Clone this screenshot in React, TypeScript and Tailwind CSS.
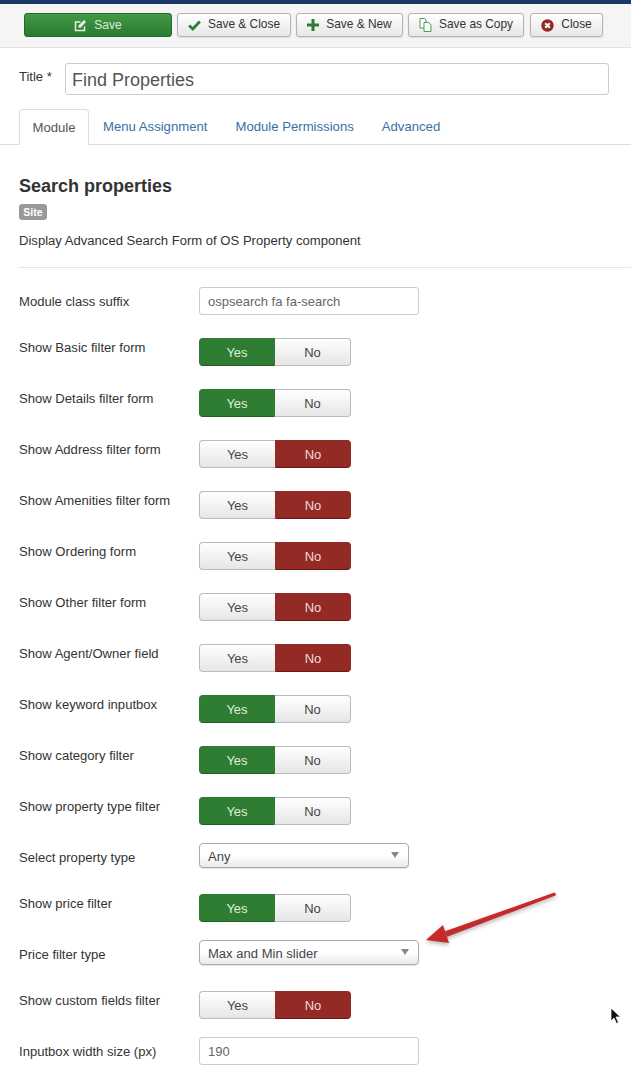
import type { ReactNode } from "react";

function ToolbarButton({ width, icon, label }: { width: string; icon: ReactNode; label: string }) {
  return (
    <button className={`${width} h-[24px] flex items-center justify-center gap-[7px] rounded-[3px] border border-[#b3b3b3] bg-gradient-to-b from-[#ffffff] to-[#e6e6e6] text-[11.9px] text-[#333] shadow-[0_1px_2px_rgba(0,0,0,0.1)]`}>
      {icon}
      <span>{label}</span>
    </button>
  );
}

function Toggle({ on }: { on: boolean }) {
  return (
    <div className="flex w-[152px] h-[28px] text-[13px] leading-[28px] text-center">
      <div className={on
        ? "w-[76px] rounded-l-[4px] border border-[#2f7d32] border-b-[#1f5e23] bg-[#2f7d32] text-[#dfeedf]"
        : "w-[76px] rounded-l-[4px] border border-[#bbb] border-r-0 bg-gradient-to-b from-[#ffffff] to-[#e6e6e6] text-[#444]"}>
        Yes
      </div>
      <div className={on
        ? "w-[76px] rounded-r-[4px] border border-[#bbb] border-l-0 bg-gradient-to-b from-[#ffffff] to-[#e6e6e6] text-[#444]"
        : "w-[76px] rounded-r-[4px] border border-[#942a25] border-b-[#6e1512] bg-[#942a25] text-[#f0d8d8]"}>
        No
      </div>
    </div>
  );
}

function Select({ width, value }: { width: string; value: string }) {
  return (
    <div className={`${width} h-[25px] flex items-center justify-between pl-[8px] pr-[9px] rounded-[4px] border border-[#aaa] bg-gradient-to-b from-[#ffffff] from-50% to-[#e9e9e9] text-[13.05px] text-[#444] shadow-[0_1px_1px_rgba(0,0,0,0.12)]`}>
      <span className="pt-[2px]">{value}</span>
      <svg width="8" height="6" viewBox="0 0 8 6" className="mb-[2px]"><path d="M0 0h8L4 6z" fill="#888" /></svg>
    </div>
  );
}

function TextInput({ value }: { value: string }) {
  return (
    <div className="w-[220px] h-[28px] flex items-center px-[8px] pt-[1px] rounded-[3px] border border-[#ccc] bg-white text-[13px] text-[#666]">
      {value}
    </div>
  );
}

function Row({ label, top, labelPt, children }: { label: string; top: string; labelPt: string; children: ReactNode }) {
  return (
    <div className={`flex ${top}`}>
      <div className={`w-[180px] text-[13.08px] leading-[18px] text-[#333] ${labelPt}`}>{label}</div>
      {children}
    </div>
  );
}

function ToggleRow({ label, on, top = "mt-[23px]" }: { label: string; on: boolean; top?: string }) {
  return (
    <Row label={label} top={top} labelPt="pt-[1px]">
      <Toggle on={on} />
    </Row>
  );
}

export default function App() {
  return (
    <div className="relative w-[631px] h-[1070px] overflow-hidden bg-white" style={{ fontFamily: '"Liberation Sans", Arial, sans-serif' }}>
      <div className="h-[4px] bg-[#1a3867]" />

      {/* Toolbar */}
      <div className="h-[44px] pt-[9px] pl-[24px] flex gap-[5px] bg-[#f5f5f5] border-b border-[#e3e3e3]">
        <button className="w-[148px] h-[24px] flex items-center justify-center gap-[7px] rounded-[3px] border border-[#1f6a25] bg-gradient-to-b from-[#419a45] to-[#2b7a30] text-[12px] text-[#d8ead8]">
          <svg width="13" height="13" viewBox="0 0 13 13" fill="none" stroke="#e4f0e4" strokeWidth="1.5">
            <path d="M10.5 7.5V11.5H1.5V3h5" />
            <path d="M4.5 8.8V6.4L10 1l2 2-5.4 5.8z" fill="#e4f0e4" stroke="none" />
          </svg>
          <span>Save</span>
        </button>
        <ToolbarButton width="w-[114px]" label="Save & Close" icon={
          <svg width="13" height="11" viewBox="0 0 13 11" fill="none" stroke="#2f7d32" strokeWidth="2.8">
            <path d="M1.2 5.5l3.6 3.4L11.8 1.5" />
          </svg>
        } />
        <ToolbarButton width="w-[107px]" label="Save & New" icon={
          <svg width="12" height="12" viewBox="0 0 12 12"><path d="M4.5 0h3v4.5H12v3H7.5V12h-3V7.500H0v-3h4.500z" fill="#2f7d32" /></svg>
        } />
        <ToolbarButton width="w-[116px]" label="Save as Copy" icon={
          <svg width="13" height="14" viewBox="0 0 13 14" fill="none" stroke="#4d9a52" strokeWidth="1">
            <path d="M1 .5h4.5L7 2v8H1z" fill="#fff" />
            <path d="M5 4.5h4.5L12 7v6.5H5z" fill="#fff" />
          </svg>
        } />
        <div className="ml-[1px]">
          <ToolbarButton width="w-[73px]" label="Close" icon={
            <svg width="13" height="13" viewBox="0 0 13 13">
              <circle cx="6.5" cy="6.5" r="6.2" fill="#942a25" />
              <path d="M4.2 4.2l4.6 4.6M8.8 4.2l-4.6 4.6" stroke="#fff" strokeWidth="2" />
            </svg>
          } />
        </div>
      </div>

      {/* Title */}
      <div className="flex mt-[15px] pl-[19px]">
        <div className="w-[46px] pt-[5px] text-[13px] leading-[18px] text-[#333]">Title *</div>
        <div className="w-[544px] h-[32px] flex items-center px-[6px] pt-[2px] rounded-[3px] border border-[#ccc] text-[18px] text-[#555]">Find Properties</div>
      </div>

      {/* Tabs */}
      <div className="flex mt-[14px] pl-[19px] h-[36px] border-b border-[#ddd] text-[13.15px]">
        <div className="w-[70px] h-[36px] leading-[36px] text-center rounded-t-[4px] border border-[#ddd] border-b-white bg-white text-[#555]">Module</div>
        <div className="ml-[14px] leading-[36px] text-[#3a70a8]">Menu Assignment</div>
        <div className="ml-[28px] leading-[36px] text-[#3a70a8]">Module Permissions</div>
        <div className="ml-[28px] leading-[36px] text-[#3a70a8]">Advanced</div>
      </div>

      {/* Module description */}
      <div className="pl-[19px]">
        <h2 className="mt-[30px] text-[18px] leading-[22px] font-bold text-[#333]">Search properties</h2>
        <span className="block mt-[7px] w-[28px] h-[16px] rounded-[3px] bg-[#999] text-center text-[10.5px] leading-[16px] font-bold text-white">Site</span>
        <p className="mt-[12px] text-[13.08px] leading-[18px] text-[#333]">Display Advanced Search Form of OS Property component</p>
      </div>
      <div className="mt-[17px] ml-[19px] border-b border-[#e5e5e5]" />

      {/* Fields */}
      <div className="pl-[19px]">
        <Row label="Module class suffix" top="mt-[19px]" labelPt="pt-[6px]">
          <TextInput value="ospsearch fa fa-search" />
        </Row>
        <ToggleRow label="Show Basic filter form" on />
        <ToggleRow label="Show Details filter form" on />
        <ToggleRow label="Show Address filter form" on={false} />
        <ToggleRow label="Show Amenities filter form" on={false} />
        <ToggleRow label="Show Ordering form" on={false} />
        <ToggleRow label="Show Other filter form" on={false} />
        <ToggleRow label="Show Agent/Owner field" on={false} />
        <ToggleRow label="Show keyword inputbox" on />
        <ToggleRow label="Show category filter" on />
        <ToggleRow label="Show property type filter" on />
        <Row label="Select property type" top="mt-[18px]" labelPt="pt-[6px]">
          <Select width="w-[210px]" value="Any" />
        </Row>
        <ToggleRow label="Show price filter" on top="mt-[26px]" />
        <Row label="Price filter type" top="mt-[18px]" labelPt="pt-[6px]">
          <Select width="w-[220px]" value="Max and Min slider" />
        </Row>
        <ToggleRow label="Show custom fields filter" on={false} top="mt-[26px]" />
        <Row label="Inputbox width size (px)" top="mt-[18px]" labelPt="pt-[6px]">
          <TextInput value="190" />
        </Row>
      </div>

      {/* Annotation arrow */}
      <svg className="absolute left-[420px] top-[885px] drop-shadow-[0_2px_2px_rgba(0,0,0,0.3)]" width="145" height="65" viewBox="0 0 145 65">
        <path d="M134.5 7.600Q136.500 9 135.500 10.400L27 51.800L25 46.200z" fill="#c62a2a" />
        <path d="M6 55L23 40L29 58z" fill="#c62a2a" />
      </svg>

      {/* Mouse cursor */}
      <svg className="absolute left-[610px] top-[1007px]" width="12" height="18" viewBox="0 0 12 18">
        <path d="M1 1v13l3-3 2.5 5.5 2-1L6 10h4.5z" fill="#111" stroke="#fff" strokeWidth="0.8" />
      </svg>
    </div>
  );
}
